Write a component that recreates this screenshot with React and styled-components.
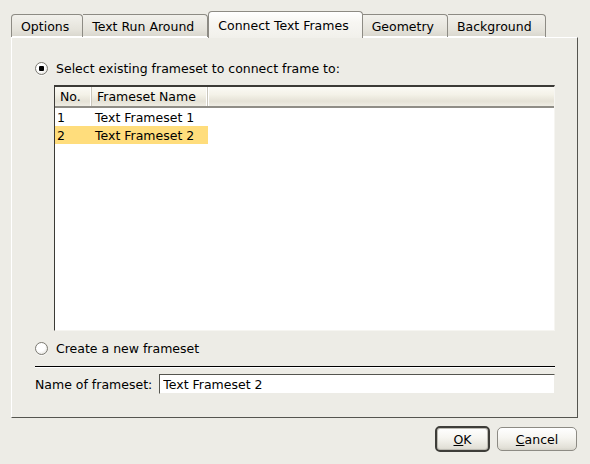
import React, { useState } from 'react';
import styled, { createGlobalStyle } from 'styled-components';

const tabs = ['Options', 'Text Run Around', 'Connect Text Frames', 'Geometry', 'Background'];

const framesets = [
  { no: '1', name: 'Text Frameset 1' },
  { no: '2', name: 'Text Frameset 2' },
];

function App() {
  const [activeTab] = useState(2);
  const [mode, setMode] = useState('existing');
  const [selected, setSelected] = useState(1);

  return (
    <Window>
      <GlobalStyle />
      <TabBar>
        {tabs.map((t, i) => (
          <Tab key={t} active={i === activeTab} first={i === 0}>
            {t}
          </Tab>
        ))}
      </TabBar>
      <Pane>
        <RadioRow onClick={() => setMode('existing')}>
          <Radio checked={mode === 'existing'} />
          Select existing frameset to connect frame to:
        </RadioRow>
        <List>
          <HeaderRow>
            <HeaderCell width={37}>No.</HeaderCell>
            <HeaderCell width={116}>Frameset Name</HeaderCell>
            <HeaderFiller />
          </HeaderRow>
          {framesets.map((f, i) => (
            <Row key={f.no} selected={i === selected} onClick={() => setSelected(i)}>
              <Cell width={37}>{f.no}</Cell>
              <Cell width={116}>{f.name}</Cell>
            </Row>
          ))}
        </List>
        <RadioRow second onClick={() => setMode('new')}>
          <Radio checked={mode === 'new'} />
          Create a new frameset
        </RadioRow>
        <Separator />
        <NameRow>
          <Label>Name of frameset:</Label>
          <Input defaultValue="Text Frameset 2" />
        </NameRow>
      </Pane>
      <Buttons>
        <Button isDefault>
          <u>O</u>K
        </Button>
        <Button>
          <u>C</u>ancel
        </Button>
      </Buttons>
    </Window>
  );
}

const GlobalStyle = createGlobalStyle`
  html, body {
    margin: 0;
    padding: 0;
    background: #edece6;
  }
  body {
    font-family: "DejaVu Sans", "Liberation Sans", sans-serif;
    font-size: 12.5px;
    color: #000;
  }
`;

const Window = styled.div`
  width: 590px;
  height: 464px;
  box-sizing: border-box;
  padding: 11px 12px 0 11px;
  background: #edece6;
  display: flex;
  flex-direction: column;
`;

const TabBar = styled.div`
  display: flex;
  align-items: flex-end;
  height: 26px;
`;

const Tab = styled.div`
  box-sizing: border-box;
  height: ${(p) => (p.active ? '27px' : '23px')};
  padding: 0 13px 0 9px;
  display: flex;
  align-items: center;
  white-space: nowrap;
  border: 1px solid #8d8b84;
  border-left: ${(p) => (p.first || p.active ? '1px solid #8d8b84' : 'none')};
  border-bottom: none;
  border-radius: ${(p) => (p.active || p.first ? '4px 4px 0 0' : '0 4px 0 0')};
  background: ${(p) =>
    p.active
      ? 'linear-gradient(#ffffff, #f7f6f2 40%, #f1f0eb)'
      : 'linear-gradient(#f2f1ec, #e4e2da 70%, #d8d6cd)'};
  margin-bottom: ${(p) => (p.active ? '-1px' : '0')};
  position: relative;
  z-index: ${(p) => (p.active ? 1 : 0)};
  box-shadow: ${(p) => (p.active ? 'none' : 'inset 0 -1px 0 #ffffff')};
`;

const Pane = styled.div`
  box-sizing: border-box;
  width: 567px;
  height: 381px;
  border-top: 1px solid #ffffff;
  border-left: 1px solid #ffffff;
  border-right: 1px solid #55554f;
  border-bottom: 1px solid #55554f;
  padding: 21px 22px 0 23px;
  display: flex;
  flex-direction: column;
`;

const RadioRow = styled.label`
  display: flex;
  align-items: center;
  gap: 8px;
  height: 18px;
  margin-top: ${(p) => (p.second ? '8px' : '0')};
  cursor: default;
`;

const Radio = styled.span`
  box-sizing: border-box;
  width: 13px;
  height: 13px;
  border-radius: 50%;
  border: 1px solid #7c7a72;
  background: radial-gradient(circle at 40% 35%, #ffffff 45%, #d6d4cc 100%);
  box-shadow: 0 1px 0 rgba(255, 255, 255, 0.8);
  display: flex;
  align-items: center;
  justify-content: center;
  &::after {
    content: '';
    width: 5px;
    height: 5px;
    background: #000;
    border-radius: 1px;
    display: ${(p) => (p.checked ? 'block' : 'none')};
  }
`;

const List = styled.div`
  box-sizing: border-box;
  margin: 8px 0 0 19px;
  height: 246px;
  background: #ffffff;
  border-top: 2px solid #3b3a36;
  border-left: 1px solid #3b3a36;
  border-right: 1px solid #f6f5f1;
  border-bottom: 1px solid #f6f5f1;
`;

const HeaderRow = styled.div`
  display: flex;
  height: 19px;
  border-bottom: 2px solid #8f8d86;
  background: linear-gradient(#fbfaf5, #f4f2e8 40%, #e5e2d6 75%, #efede4);
`;

const HeaderCell = styled.div`
  box-sizing: border-box;
  width: ${(p) => p.width}px;
  padding-left: 5px;
  display: flex;
  align-items: center;
  border-right: 1px solid #c9c6bb;
  box-shadow: inset -1px 0 0 #ffffff;
`;

const HeaderFiller = styled.div`
  flex: 1;
  box-shadow: inset 1px 0 0 #ffffff;
`;

const Row = styled.div`
  display: flex;
  width: fit-content;
  height: 18px;
  background: ${(p) => (p.selected ? '#ffdd7c' : 'transparent')};
`;

const Cell = styled.div`
  box-sizing: border-box;
  width: ${(p) => p.width}px;
  padding-left: ${(p) => (p.width < 50 ? '2px' : '3px')};
  display: flex;
  align-items: center;
`;

const Separator = styled.div`
  height: 1px;
  margin: 9px 0 0 0;
  background: #000;
  box-shadow: 0 1px 0 #ffffff;
`;

const NameRow = styled.div`
  display: flex;
  align-items: center;
  gap: 7px;
  margin-top: 7px;
`;

const Label = styled.span`
  white-space: nowrap;
`;

const Input = styled.input`
  box-sizing: border-box;
  flex: 1;
  height: 20px;
  margin: 0;
  padding: 0 3px;
  font: inherit;
  color: #000;
  background: #ffffff;
  border-top: 1px solid #55554f;
  border-left: 1px solid #55554f;
  border-right: 1px solid #edece6;
  border-bottom: 1px solid #edece6;
  outline: none;
`;

const Buttons = styled.div`
  display: flex;
  justify-content: flex-end;
  align-items: center;
  gap: 7px;
  margin-top: 8px;
  padding-right: 1px;
`;

const Button = styled.button`
  box-sizing: border-box;
  width: ${(p) => (p.isDefault ? '55px' : '80px')};
  height: ${(p) => (p.isDefault ? '26px' : '24px')};
  font: inherit;
  color: #000;
  border: ${(p) => (p.isDefault ? '2px solid #3e3d39' : '1px solid #8d8b84')};
  border-radius: 5px;
  background: linear-gradient(#ffffff, #f6f5f0 45%, #e2e0d7 90%, #d5d3ca);
  box-shadow: ${(p) => (p.isDefault ? 'inset 0 0 0 1px #bdbbb3' : 'none')};
  padding: 0;
  u {
    text-decoration: underline;
  }
`;

export default App;
